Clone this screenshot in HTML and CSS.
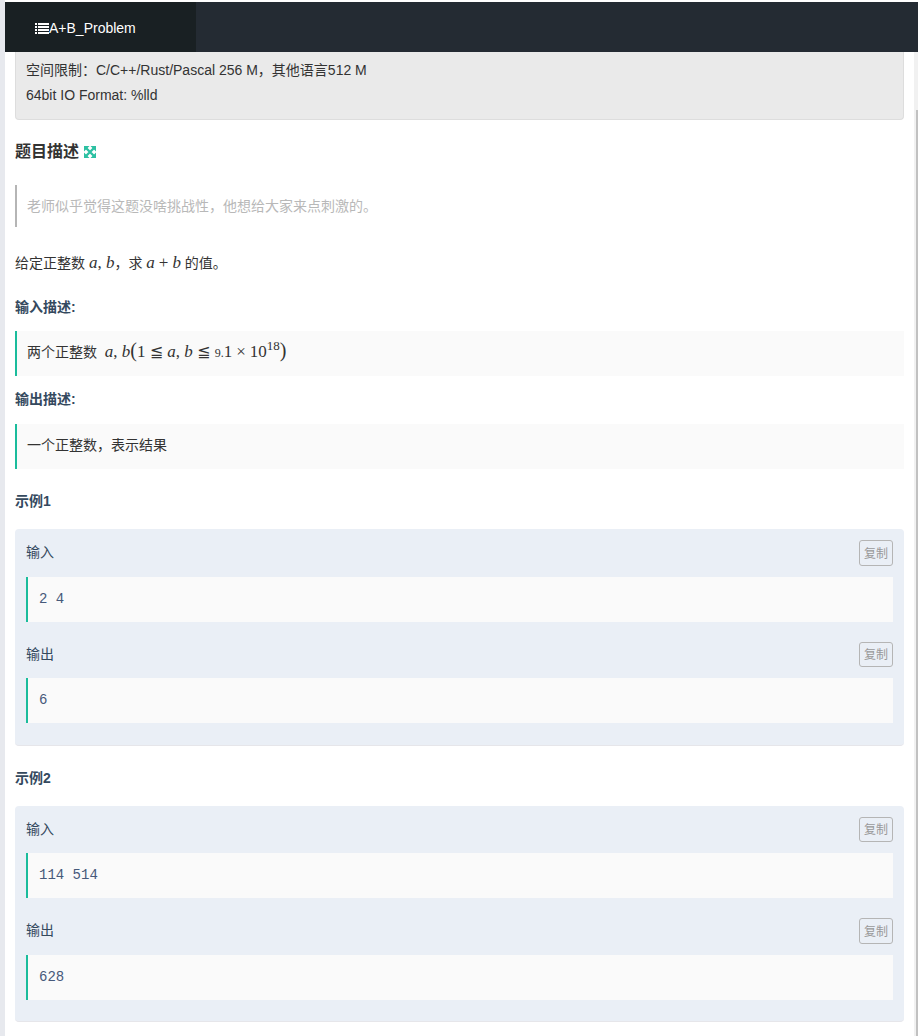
FILE: index.html
```html
<!DOCTYPE html>
<html lang="en">
<head>
    <meta charset="UTF-8">
    <meta name="viewport" content="width=device-width, initial-scale=1.0">
    <title>A+B_Problem</title>
    <link rel="stylesheet" href="styles.css">
</head>
<body>
<div class="frame">
    <header class="topbar">
        <div class="tab">
            <svg class="list-icon" width="14" height="11" viewBox="0 0 14 11">
                <path fill="#fff" d="M0 0h2v2H0zM3 0h11v2H3zM0 3h2v2H0zM3 3h11v2H3zM0 6h2v2H0zM3 6h11v2H3zM0 9h2v2H0zM3 9h11v2H3z"/>
            </svg>A+B_Problem
        </div>
    </header>
    <div class="body-row">
        <main class="content">
            <div class="limits">
                <div>空间限制：C/C++/Rust/Pascal 256 M，其他语言512 M</div>
                <div>64bit IO Format: %lld</div>
            </div>

            <h2 class="desc-title">题目描述
                <svg class="expand-icon" width="12" height="12" viewBox="0 0 12 12">
                    <path fill="#2cc0a2" d="M0 0h5.5L0 5.5zM12 0v5.5L6.5 0zM0 12V6.5L5.5 12zM12 12H6.5L12 6.5z"/>
                    <path stroke="#2cc0a2" stroke-width="2.4" d="M2 2l8 8M10 2l-8 8"/>
                </svg>
            </h2>

            <blockquote class="quote">老师似乎觉得这题没啥挑战性，他想给大家来点刺激的。</blockquote>

            <p class="statement">给定正整数 <span class="math"><i>a</i>, <i>b</i></span>，求 <span class="math"><i>a</i><span class="bin">+</span><i>b</i></span> 的值。</p>

            <h3 class="sub-title first">输入描述:</h3>
            <div class="note">两个正整数 &nbsp;<span class="math"><i>a</i>, <i>b</i><span class="paren">(</span>1 <span class="rel">≦</span> <i>a</i>, <i>b</i> <span class="rel">≦</span> <small>9.</small>1<span class="bin">×</span>10<sup>18</sup><span class="paren">)</span></span></div>

            <h3 class="sub-title second">输出描述:</h3>
            <div class="note">一个正整数，表示结果</div>

            <h3 class="sub-title sample-title">示例1</h3>
            <section class="sample">
                <div class="sample-head"><span class="sample-label">输入</span><button class="copy">复制</button></div>
                <pre class="code">2 4</pre>
                <div class="sample-head lower"><span class="sample-label">输出</span><button class="copy">复制</button></div>
                <pre class="code">6</pre>
            </section>

            <h3 class="sub-title sample-title">示例2</h3>
            <section class="sample">
                <div class="sample-head"><span class="sample-label">输入</span><button class="copy">复制</button></div>
                <pre class="code">114 514</pre>
                <div class="sample-head lower"><span class="sample-label">输出</span><button class="copy">复制</button></div>
                <pre class="code">628</pre>
            </section>
        </main>
        <div class="scrollbar"><div class="thumb"></div></div>
    </div>
</div>
</body>
</html>
```

FILE: styles.css
```css
html, body {
    margin: 0;
    height: 100%;
    overflow: hidden;
}
body {
    background: #fff;
    color: #333;
    font-family: "Liberation Sans", "Noto Sans CJK SC", sans-serif;
    font-size: 14px;
    line-height: 20px;
}
.frame {
    display: flex;
    flex-direction: column;
    box-sizing: border-box;
    height: 100%;
    padding-top: 2px;
    border-left: 5px solid #e7e9ee;
}
.topbar {
    flex: none;
    height: 50px;
    background: #242b33;
}
.tab {
    display: flex;
    align-items: center;
    box-sizing: border-box;
    width: 191px;
    height: 50px;
    padding: 2px 0 0 30px;
    background: #192023;
    color: #fff;
}
.list-icon {
    flex: none;
}
.body-row {
    display: flex;
    flex: 1;
    min-height: 0;
}
.content {
    flex: 1;
    min-width: 0;
    padding: 0 10px;
}
.scrollbar {
    flex: none;
    display: flex;
    width: 4px;
    background: #f1f1f1;
}
.thumb {
    width: 2px;
    margin: 58px 0 0 2px;
    background: #c1c1c1;
}

.limits {
    padding: 6px 10px 11px;
    background: #eaeaea;
    border: 1px solid #ddd;
    border-top: none;
    border-radius: 0 0 4px 4px;
    line-height: 25px;
}
.desc-title {
    display: flex;
    align-items: center;
    gap: 5px;
    margin: 22px 0 23px;
    font-size: 16px;
    line-height: 20px;
}
.quote {
    margin: 0 0 26px;
    padding: 11px 10px;
    border-left: 2px solid #b5b5b5;
    color: #b8b8b8;
}
.statement {
    margin: 0;
}
.math {
    font-family: "Liberation Serif", serif;
    font-size: 17px;
    line-height: 0;
}
.math .bin {
    margin: 0 4px;
}
.math .rel {
    font-family: "DejaVu Sans", sans-serif;
    font-size: 16px;
}
.math .paren {
    font-size: 20px;
}
.math small {
    font-size: 12px;
}
.math sup {
    font-size: 13px;
    line-height: 0;
}
.sub-title {
    margin: 0;
    font-size: 14px;
    line-height: 20px;
    color: #34495e;
}
.sub-title.first {
    margin: 24px 0 14px;
}
.sub-title.second {
    margin: 13px 0 15px;
}
.sub-title.sample-title {
    margin: 22px 0 18px;
}
.note {
    height: 45px;
    box-sizing: border-box;
    padding: 0 10px;
    background: #fafafa;
    border-left: 2px solid #1abc9c;
    line-height: 42px;
}

.sample {
    padding: 11px 11px 21.4px;
    background: #eaeff6;
    border-bottom: 1px solid #e6e6ea;
    border-radius: 4px;
}
.sample-head {
    display: flex;
    justify-content: space-between;
    align-items: center;
    height: 25.6px;
    margin-bottom: 11px;
    color: #34495e;
}
.sample-head.lower {
    margin-top: 20px;
}
.sample-label {
    margin-bottom: 1px;
}
.copy {
    box-sizing: border-box;
    width: 34px;
    height: 100%;
    padding: 0 0 1px;
    background: transparent;
    border: 1px solid #b5b5b5;
    border-radius: 3px;
    color: #999;
    font-family: inherit;
    font-size: 12px;
}
.code {
    height: 45px;
    box-sizing: border-box;
    margin: 0;
    padding: 0 11px;
    background: #fafafa;
    border-left: 2px solid #1abc9c;
    color: #46597a;
    font-family: "Liberation Mono", monospace;
    font-size: 14px;
    line-height: 45px;
}
```
